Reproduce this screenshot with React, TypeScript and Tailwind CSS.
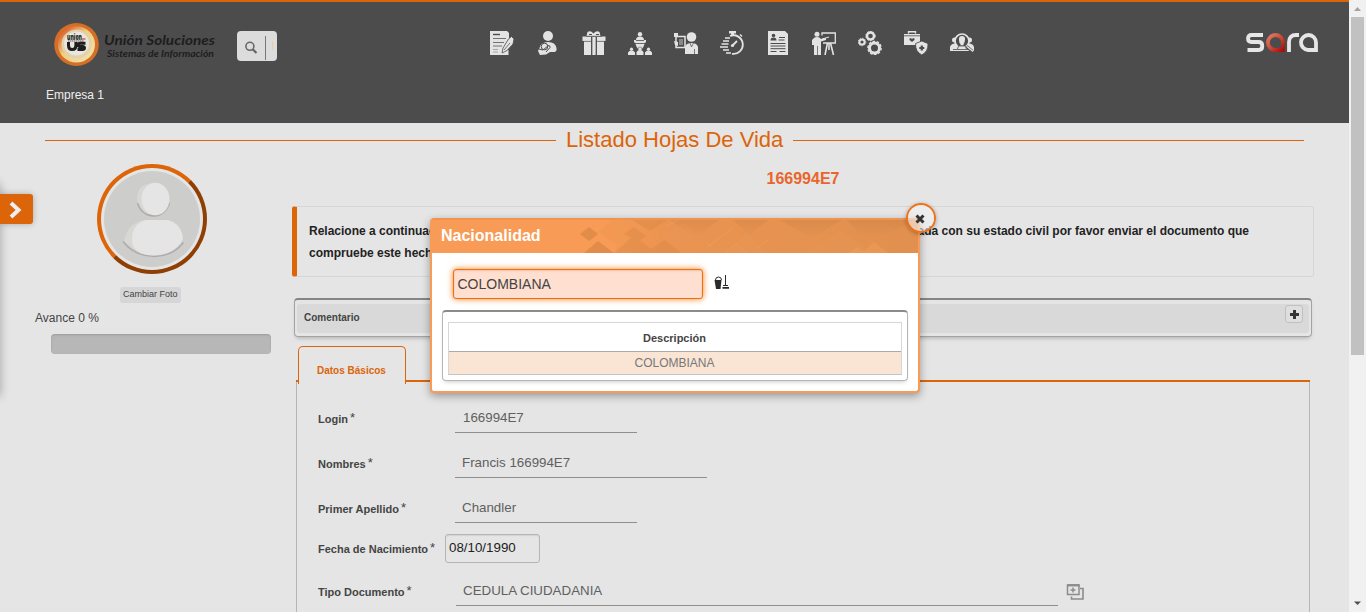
import React from "react";

type IconProps = { children: React.ReactNode };

const Glyph = ({ children }: IconProps) => (
  <svg width="24" height="24" viewBox="0 0 24 24" fill="#e3e3e3" className="shrink-0">
    {children}
  </svg>
);

const DARK = "#4c4c4c";
const LIGHT = "#e3e3e3";

const menuIcons: React.ReactNode[] = [
  <Glyph key="contract">
    <path d="M0 0h17l2 2v8l-3 6v8H0z" />
    <path d="M3 3.500h7" stroke={DARK} strokeWidth="1.4" />
    <path d="M3 7.500h13M3 11.500h11M3 15h9" stroke={DARK} strokeWidth="1" opacity=".75" />
    <path d="M3 18.500h5M3 21h5" stroke={DARK} strokeWidth="1" opacity=".4" />
    <path d="M13.500 24v-4l5-1v5z" />
    <path d="M21.500 5.500L24 8l-1 5-6 6.500-5 2.500 1-5 5.500-9z" stroke={DARK} strokeWidth=".8" />
    <path d="M14 19l6-7" stroke={DARK} strokeWidth=".7" />
  </Glyph>,
  <Glyph key="care">
    <circle cx="12" cy="5" r="5" />
    <path d="M3.500 17q1-6 8.500-6 7.500 0 8.500 6 .5 4-2.500 4h-4l-4 2.500-6 .5-2-4z" />
    <circle cx="8.500" cy="15.500" r="3.300" fill={LIGHT} stroke={DARK} strokeWidth="1" />
    <path d="M3 18l4 1 5.500-4.500q2 0 1.500 2L10 21" fill="none" stroke={DARK} strokeWidth="1" />
  </Glyph>,
  <Glyph key="gift">
    <path d="M0.500 5.500h23v4.500h-1.500v14h-20v-14h-1.500z" />
    <path d="M4.500 5l1-4q3-2 6 1.500 3-3.500 6-1.500l1 4z" />
    <path d="M7 3.500h3M14 3.500h3" stroke={DARK} strokeWidth="1.200" />
    <path d="M4 5.300h16" stroke={DARK} strokeWidth=".7" />
    <path d="M9.700 6v18M14.300 6v18" stroke={DARK} strokeWidth="1.300" />
    <path d="M1 10.400h8M15 10.400h8" stroke={DARK} strokeWidth=".7" />
  </Glyph>,
  <Glyph key="hierarchy">
    <circle cx="12" cy="3.200" r="2.200" />
    <path d="M8 9q0-3.500 4-3.500t4 3.500h2v2.500h-1l-1 3-1.500 3h-5l-1.500-3-1-3H6V9z" />
    <path d="M5.500 12.500h13M8 9.500h8" stroke={DARK} strokeWidth=".8" />
    <circle cx="3.500" cy="18.200" r="1.600" />
    <circle cx="12" cy="18" r="2" stroke={DARK} strokeWidth=".5" />
    <circle cx="20.500" cy="18.200" r="1.600" />
    <path d="M0 24v-2.500q1-2 3.500-2t3.500 2V24zM8.500 24v-3q1-2 3.500-2t3.500 2v3zM17 24v-2.500q1-2 3.500-2t3.500 2V24z" />
  </Glyph>,
  <Glyph key="training">
    <circle cx="17.500" cy="6" r="4.800" />
    <path d="M11 23v-7q1-4 6.500-4t6.500 4v7z" />
    <path d="M16 12l1.500 4 2-4M20.500 18v5" stroke={DARK} strokeWidth=".7" fill="none" />
    <path d="M2 5.500h9v11H2z" fill={DARK} stroke={LIGHT} strokeWidth="1.500" />
    <path d="M5 8h4v6H5z" opacity=".4" />
    <path d="M0 2h4v4H0zM0 10l4 1v4l-3-1z" />
  </Glyph>,
  <Glyph key="timer">
    <path d="M9 0h7v2.500H9zM11 2h3v2h-3z" />
    <path d="M20 3.500l2 2" stroke={LIGHT} strokeWidth="1.500" />
    <path d="M10 5a9.300 9.300 0 1 1 2 17.800" fill="none" stroke={LIGHT} strokeWidth="1.800" />
    <path d="M5 7h5M3 10h6M1.500 13h7M0 16h8M3 19h6M6 22h5" stroke={LIGHT} strokeWidth="1.500" />
    <path d="M12.500 14.500l4.500-4.500" stroke={LIGHT} strokeWidth="1.800" />
    <circle cx="12.500" cy="14.500" r="1.600" />
  </Glyph>,
  <Glyph key="resume">
    <path d="M2 0h17l3 3v21H2z" />
    <circle cx="7.500" cy="4.500" r="1.800" fill={DARK} />
    <path d="M4.500 9.500q0-3 3-3t3 3z" fill={DARK} />
    <path d="M13 6.500h6M12.500 9h6M4.500 12.500h15M4.500 15h15M4.500 17.700h15M4.500 20.500h6M13.500 20.500h6" stroke={DARK} strokeWidth="1" />
  </Glyph>,
  <Glyph key="teacher">
    <circle cx="5" cy="3.200" r="2.500" />
    <path d="M1 8q1-2 4-2 3 0 4 2l5-1v2l-5 1.500V24H2v-10H0V9z" />
    <path d="M5.500 15v9" stroke={DARK} strokeWidth=".7" />
    <path d="M10 4.500V2h13.300v10H11" fill="none" stroke={LIGHT} strokeWidth="1.300" />
    <path d="M15.500 12l-2.500 12M18.500 12l3 12M17 12v7" stroke={LIGHT} strokeWidth="1.600" />
    <path d="M10 8l7-2" stroke={LIGHT} />
  </Glyph>,
  <Glyph key="gears">
    <g fill="none" stroke={LIGHT}>
      <circle cx="12.500" cy="5" r="3.500" strokeWidth="2.400" />
      <circle cx="12.500" cy="5" r="4.700" strokeWidth="1" strokeDasharray="1.800 1.200" />
      <circle cx="4" cy="11" r="2.600" strokeWidth="2" />
      <circle cx="4" cy="11" r="3.800" strokeWidth=".8" strokeDasharray="1.500 1" />
      <circle cx="16.500" cy="17" r="5" strokeWidth="3" />
      <circle cx="16.500" cy="17" r="6.700" strokeWidth="1.200" strokeDasharray="2.600 1.600" />
    </g>
  </Glyph>,
  <Glyph key="insurance">
    <path d="M4.500 2.500V.8h7v1.700" fill="none" stroke={LIGHT} strokeWidth="1.400" />
    <path d="M0 3h16v11H0z" />
    <path d="M0 4.800h16" stroke={DARK} strokeWidth=".8" />
    <path d="M8 11L5.500 9q-.5-2 1.200-2L8 8l1.300-1q1.700 0 1.200 2z" fill={DARK} />
    <path d="M17.800 10l6.200 2.500q.5 8-6.200 11.500Q11 20.500 11.600 12.500z" stroke={DARK} strokeWidth=".9" />
    <path d="M17.800 14.500v5M15.300 17h5" stroke={DARK} strokeWidth="2.200" />
  </Glyph>,
  <Glyph key="search-people">
    <circle cx="4.500" cy="9" r="2.500" />
    <circle cx="19.500" cy="9" r="2.500" />
    <path d="M0 20v-4q1-3.500 5-3.500h14q4 0 5 3.500v4z" />
    <circle cx="12" cy="10" r="7" fill={DARK} stroke={LIGHT} strokeWidth="1.700" />
    <path d="M12 5q3.500 0 3 4-.5 3-1.500 4v1.500h-3V13Q9 12 9 9q-.5-4 3-4z" />
    <path d="M3 18.500h15M7.500 18l1-3h7l1 3" stroke={DARK} strokeWidth=".8" fill={LIGHT} />
    <path d="M16.500 15.500l6 5" stroke={DARK} strokeWidth="3" />
    <path d="M17 15.500l6 5" stroke={LIGHT} strokeWidth="1.500" />
  </Glyph>,
];

const CompanyLogo = () => (
  <svg width="162" height="46" viewBox="0 0 162 46" className="shrink-0">
    <defs>
      <linearGradient id="ring" x1="0" y1="0" x2="1" y2="1">
        <stop offset="0" stopColor="#d8361a" />
        <stop offset=".45" stopColor="#efcf80" />
        <stop offset="1" stopColor="#f0e6b4" />
      </linearGradient>
    </defs>
    <ellipse cx="22.500" cy="21.500" rx="22.300" ry="21.500" fill="#d66e26" />
    <ellipse cx="22.500" cy="21.500" rx="18.500" ry="18" fill="url(#ring)" />
    <ellipse cx="22.500" cy="21" rx="15" ry="14.500" fill="#e2d1ac" />
    <ellipse cx="22.500" cy="20.500" rx="12.500" ry="12" fill="#e9e6df" />
    <text x="13" y="16.500" fontFamily="Open Sans, sans-serif" fontWeight="800" fontSize="8" fill="#222" textLength="15" lengthAdjust="spacingAndGlyphs">union</text>
    <path d="M28 16h3.500" stroke="#cf3a2a" strokeWidth="1.200" />
    <path d="M14 18h16" stroke="#333" strokeWidth=".8" strokeDasharray="1.500 .5" />
    <path d="M14.500 19v3.500q0 4 3.700 4t3.700-4V19M31.500 20.300h-5q-2.300 0-2.300 1.700t2.300 1.600h2q2 .2 2 1.500t-2 1.500h-5" fill="none" stroke="#1e1e1e" strokeWidth="3" />
    <text x="50" y="22" fontFamily="Lato, sans-serif" fontWeight="700" fontStyle="italic" fontSize="14" fill="#1d1d1d" textLength="111" lengthAdjust="spacingAndGlyphs">Unión Soluciones</text>
    <text x="53" y="33.500" fontFamily="Lato, sans-serif" fontWeight="700" fontStyle="italic" fontSize="9.500" fill="#1d1d1d" textLength="107" lengthAdjust="spacingAndGlyphs">Sistemas de Información</text>
  </svg>
);

const SaraLogo = () => (
  <svg width="72" height="19" viewBox="0 0 72 19" aria-label="sara" className="mt-[31px] shrink-0">
    <defs>
      <linearGradient id="drop" x1="0" y1="0" x2="1" y2="1">
        <stop offset="0" stopColor="#dd8068" />
        <stop offset=".5" stopColor="#cf4a38" />
        <stop offset="1" stopColor="#a80f0c" />
      </linearGradient>
    </defs>
    <g fill="none" strokeWidth="3.800">
      <path d="M17 2H5.500Q2 2 2 5.500T5.500 9h7q3.800 0 3.800 4t-3.800 4H1.500" stroke="#e6e6e6" />
      <path d="M37 17h-8a7.500 7.500 0 1 1 8-7.500z" stroke="url(#drop)" />
      <path d="M43 19V9q0-7 7-7h3" stroke="#e6e6e6" />
      <path d="M70 17h-8a7.500 7.500 0 1 1 8-7.500z" stroke="#e6e6e6" />
    </g>
  </svg>
);

const Header = () => (
  <header className="flex h-[123px] shrink-0 flex-col border-t-2 border-[#dc6409] bg-[#4c4c4c]">
    <div className="flex h-[78px] items-start pl-[54px]">
      <div className="mt-[21px] flex">
        <CompanyLogo />
      </div>
      <div className="ml-[21px] mt-[29px] flex h-[30px] w-10 items-start rounded bg-[#dcdcdc]">
        <svg width="13" height="13" viewBox="0 0 13 13" className="ml-2 mt-[10px]" fill="none" stroke="#666">
          <circle cx="4.900" cy="5.300" r="4" strokeWidth="1.600" />
          <path d="M7.700 8.200l3.800 3.800" strokeWidth="2.200" />
        </svg>
        <span className="ml-[7px] mt-[5px] h-6 w-px bg-[#777]" />
        <span className="ml-[6px] mt-[10px] h-[9px] w-px bg-[#e8cf9a]" />
      </div>
      <nav className="ml-[213px] mt-[29px] flex gap-[22px]">{menuIcons}</nav>
      <div className="ml-[272px]">
        <SaraLogo />
      </div>
    </div>
    <p className="pl-[46px] pt-[7px] text-[12px] leading-[17px] text-[#efefef]">Empresa 1</p>
  </header>
);

const Avatar = () => (
  <div className="ml-[97px] h-[110px] w-[110px] rounded-full border-4 border-b-[#8f3f04] border-l-[#dc6409] border-r-[#8f3f04] border-t-[#dc6409] p-[3px]">
    <svg width="96" height="96" viewBox="0 0 96 96">
      <circle cx="48" cy="48" r="48" fill="#cdcdcb" />
      <path d="M33 28q0-15 16-16v33q-15-1-16-17zM20 70q4-20 23-21l10 34q-20 1-33-13z" fill="#d7d7d5" />
      <path d="M33.500 32q4 12.500 16 13Q61 45 65.500 32M19 70.500q11 14.500 31.500 15Q69 85 79.500 71.500" fill="none" stroke="#b1aaaa" strokeWidth="1.400" />
      <ellipse cx="51.500" cy="28" rx="14" ry="16.300" fill="#e5e5e5" />
      <path d="M28 68q0-15 14-19h22q14 4 15 19-8 16-30 16.500Q28 84 28 68z" fill="#e5e5e5" />
    </svg>
  </div>
);

const Profile = () => (
  <aside className="flex w-[292px] shrink-0 flex-col pt-[7px]">
    <Avatar />
    <div className="ml-[120px] mt-[13px] h-4 w-[61px] whitespace-nowrap rounded-[3px] bg-[#d6d6d6] pl-[3px] text-[9px] leading-[15px] text-[#444]">
      Cambiar Foto
    </div>
    <p className="ml-[35px] mt-[7px] text-[12px] leading-4 text-[#444]">Avance 0 %</p>
    <div className="ml-[51px] mt-[8px] h-5 w-[220px] rounded bg-[#b7b7b7] shadow-[inset_0_1px_2px_rgba(0,0,0,0.15)]" />
  </aside>
);

type RowProps = { label: string; height: string; top: string; children: React.ReactNode };

const Row = ({ label, height, top, children }: RowProps) => (
  <div className={`flex items-start pl-[21px] ${height}`}>
    <label className={`flex w-[137px] shrink-0 whitespace-nowrap text-[11px] font-bold leading-4 text-[#444] ${top}`}>
      {label}
      <span className="-mt-px ml-[2px] text-[13px] font-normal">*</span>
    </label>
    {children}
  </div>
);

const Value = ({ width, text, pad }: { width: string; text: string; pad: string }) => (
  <div className={`h-[31px] border-b border-[#8f8f8f] text-[13.330px] leading-[31px] text-[#606060] ${pad} ${width}`}>
    {text}
  </div>
);

const Sheet = () => (
  <section className="flex w-[1022px] shrink-0 flex-col">
    <h2 className="pt-[12px] text-center text-[16px] font-bold leading-5 text-[#e8662c]">166994E7</h2>
    <div className="mt-[17px] flex h-[71px] flex-col rounded-[3px] border border-l-[5px] border-[#d6d6d6] border-l-[#dc6409] pl-3 pr-[64px] pt-[13px] text-[12px] font-bold leading-[22px] text-[#222]">
      <div className="flex justify-between whitespace-nowrap">
        <span>Relacione a continuación</span>
        <span>relacionada con su estado civil por favor enviar el documento que</span>
      </div>
      <span>compruebe este hecho.</span>
    </div>
    <div className="ml-[2px] mt-[21px] h-[39px] w-[1018px] rounded-[4px] border border-t-2 border-[#a3a3a3] border-t-[#858585] px-[2px] pb-[3px] pt-[4px] shadow-[0_3px_4px_-2px_rgba(0,0,0,0.25)]">
      <div className="flex h-[29px] items-start justify-between rounded-[3px] bg-[#d9d9d9] pl-[7px] pr-[6px]">
        <span className="pt-[6px] text-[10px] font-bold leading-4 text-[#444]">Comentario</span>
        <span className="mt-px flex h-[18px] w-[18px] items-center justify-center rounded-[3px] border border-[#c0c0c0] bg-[#dedede]">
          <svg width="9" height="9" viewBox="0 0 9 9" fill="#333">
            <path d="M3 0h3v3h3v3H6v3H3V6H0V3h3z" />
          </svg>
        </span>
      </div>
    </div>
    <div className="ml-1 mt-[9px] flex h-[36px] items-end">
      <span className="h-[2px] w-[2px] bg-[#dc6409]" />
      <div className="z-10 -mb-[2px] h-[38px] w-[108px] shrink-0 rounded-t-[5px] border border-b-0 border-[#dc6409] bg-[#e5e5e5] pl-[18px] pt-[16px] text-[10px] font-bold leading-4 text-[#dc6409]">
        Datos Básicos
      </div>
      <span className="h-[2px] w-[904px] bg-[#dc6409]" />
    </div>
    <div className="ml-1 h-[260px] w-[1014px] border-x border-[#b5b5b5] pt-[20px]">
      <Row label="Login" height="h-[45px]" top="mt-[9px]">
        <Value width="w-[182px]" pad="pl-[8px]" text="166994E7" />
      </Row>
      <Row label="Nombres" height="h-[45px]" top="mt-[9px]">
        <Value width="w-[252px]" pad="pl-[7px]" text="Francis 166994E7" />
      </Row>
      <Row label="Primer Apellido" height="h-[42px]" top="mt-[9px]">
        <Value width="w-[182px]" pad="pl-[7px]" text="Chandler" />
      </Row>
      <Row label="Fecha de Nacimiento" height="h-[41px]" top="mt-[7px]">
        <div className="-ml-[10px] h-[29px] w-[95px] rounded-[3px] border border-[#b5b5b5] pl-[3px] text-[13.330px] leading-[26px] text-[#222] shadow-[inset_0_1px_1px_rgba(0,0,0,0.08)]">
          08/10/1990
        </div>
      </Row>
      <Row label="Tipo Documento" height="h-[45px]" top="mt-[9px]">
        <div className="ml-px">
          <Value width="w-[602px]" pad="pl-[7px]" text="CEDULA CIUDADANIA" />
        </div>
        <svg width="18" height="17" viewBox="0 0 18 17" className="ml-[8px] mt-[8px]" fill="none" stroke="#8c8c8c">
          <path d="M1.500 2h11.500v9.500H1.500z" strokeWidth="1.500" />
          <path d="M1 2.300h12.500" strokeWidth="2.200" />
          <path d="M4.500 7h5M7 4.500v5" strokeWidth="1.500" />
          <path d="M14 5.500h3v10.500H5.500v-2.500" strokeWidth="1.600" />
        </svg>
      </Row>
    </div>
  </section>
);

const Scrollbar = () => (
  <div className="flex h-full w-[17px] shrink-0 flex-col items-center bg-[#f1f1f1]">
    <svg width="17" height="17" viewBox="0 0 17 17" className="shrink-0" fill="#a3a3a3">
      <path d="M5 11l3.500-4 3.500 4z" />
    </svg>
    <span className="h-[338px] w-[13px] bg-[#c1c1c1]" />
    <svg width="17" height="17" viewBox="0 0 17 17" className="mt-auto shrink-0" fill="#505050">
      <path d="M5 6.500h7L8.500 10z" />
    </svg>
  </div>
);

const HeaderPattern = () => (
  <svg width="486" height="33" viewBox="0 0 486 33" className="absolute left-0 top-0">
    <defs>
      <linearGradient id="shade" x1="0" x2="1">
        <stop offset="0" stopColor="#f79b56" />
        <stop offset=".2" stopColor="#e8924f" />
        <stop offset="1" stopColor="#dc8d4d" />
      </linearGradient>
      <linearGradient id="depth" x1="0" y1="0" x2="0" y2="1">
        <stop offset="0" stopColor="#8a5a30" stopOpacity=".12" />
        <stop offset="1" stopColor="#ffa35a" stopOpacity=".1" />
      </linearGradient>
    </defs>
    <path d="M178 0h308v33H182l4-10-20-11z" fill="url(#shade)" opacity=".8" />
    <path d="M148 14l9-7 9 7-9 7zM152 33l14-12 16 12z" fill="#dd8a47" opacity=".85" />
    <path d="M166 12l16-12 18 13-16 12z" fill="#f09752" opacity=".6" />
    <path d="M182 33l20-18 22 18zM200 0l18 11 17-11zM192 14l10-7 12 9-8 6zM219 29l14-9 16 13h-26z" fill="#cf8142" opacity=".3" />
    <path d="M238 0l25 18 24-18zM301 0l16 15 19-15zM348 0l31 18 31-18zM414 0l24 23 45-23z" fill="url(#depth)" />
    <path d="M228 15l24-12 14 13-18 14zM292 33l23-21 20 21zM369 33l38-22 35 22z" fill="#e9975a" opacity=".3" />
    <path d="M416 33l9-6 7 4 10-9 14 11z" fill="#ee9a57" opacity=".7" />
    <path d="M234 6l12-6M275 27l26-19M280 27l-6-5M293 33l11-9 11 9M324 29l12-9" fill="none" stroke="#efa264" strokeWidth=".7" opacity=".8" />
  </svg>
);

const Modal = () => (
  <div className="absolute left-[430px] top-[218px] z-20 h-[175px] w-[490px] rounded-[4px] border-2 border-[#f79b56] border-t-[#ee9450] bg-white shadow-[0_3px_9px_rgba(0,0,0,0.35)]">
    <div className="relative h-[33px] bg-[#f79b56] pl-[9px]">
      <HeaderPattern />
      <h3 className="relative text-[16px] font-bold leading-[31px] text-white">Nacionalidad</h3>
    </div>
    <div className="flex items-start pl-[21px] pt-[16px]">
      <div className="h-[30px] w-[250px] rounded-[3px] border border-[#f06f0c] bg-[#fedfd0] pl-[3.500px] text-[14px] leading-[28px] text-[#444] shadow-[0_0_6px_#f58220,inset_0_1px_2px_rgba(120,50,0,0.15)]">
        COLOMBIANA
      </div>
      <svg width="16" height="16" viewBox="0 0 16 16" className="ml-[11px] mt-[6px]" fill="#2b2b2b">
        <path d="M1.500 5q0-3 3-3t3 3" fill="none" stroke="#2b2b2b" />
        <path d="M.5 5h7L6.500 14H2z" />
        <path d="M11 0h1v10h-1zM9 10h5v1H9zM8.500 12h6.500v1.700H8.500z" />
      </svg>
    </div>
    <div className="ml-[10px] mt-[11px] h-[71px] w-[466px] rounded-[4px] border border-t-2 border-[#b5b5b5] border-t-[#8b8b8b] px-[5px] pt-[10px] shadow-[0_3px_4px_-2px_rgba(0,0,0,0.2)]">
      <div className="h-[53px] border border-[#d6d6d6] border-b-[#c4c4c4] text-center">
        <div className="h-[29px] border-b border-[#aaa] pr-px text-[11px] font-bold leading-[30px] text-[#444]">Descripción</div>
        <div className="h-[22px] bg-[#fae5d5] pr-px text-[12px] leading-[23px] text-[#777]">COLOMBIANA</div>
      </div>
    </div>
    <button className="absolute -right-[18px] -top-[17px] flex h-[30px] w-[30px] items-center justify-center rounded-full border-2 border-[#ef7118] shadow-[0_1px_4px_rgba(0,0,0,0.3)]">
      <span className="absolute inset-0 rounded-full bg-[#f2f2f2]/60" />
      <svg width="10" height="10" viewBox="0 0 10 10" className="relative -left-[1px] top-[1px]">
        <path d="M1.500 1.500l7 7M8.500 1.500l-7 7" stroke="#333" strokeWidth="3" />
      </svg>
    </button>
  </div>
);

export default function App() {
  return (
    <div className="relative flex h-[612px] w-[1366px] overflow-hidden bg-[#e5e5e5] font-['Liberation_Sans',Arial,sans-serif]">
      <div className="flex w-[1349px] shrink-0 flex-col">
        <Header />
        <div className="flex h-[34px] shrink-0 items-center gap-[10px] pl-[45px]">
          <span className="h-px w-[511px] bg-[#dc6409]" />
          <h1 className="w-[217px] whitespace-nowrap text-center text-[22px] leading-[34px] text-[#dc6409]">Listado Hojas De Vida</h1>
          <span className="h-px w-[511px] bg-[#dc6409]" />
        </div>
        <main className="flex">
          <Profile />
          <Sheet />
        </main>
      </div>
      <Scrollbar />
      <div className="absolute -left-[10px] top-[184px] h-[212px] w-[10px] shadow-[0_0_10px_rgba(0,0,0,0.3)]" />
      <button className="absolute left-0 top-[194px] flex h-[30px] w-[33px] items-center rounded-r-[3px] bg-[#dc6409] pl-[9px] shadow-[0_0_6px_rgba(0,0,0,0.25)]">
        <svg width="14" height="18" viewBox="0 0 14 18" className="mt-[2px]">
          <path d="M2 2l7.500 7L2 16" fill="none" stroke="#efefef" strokeWidth="4" />
        </svg>
      </button>
      <Modal />
    </div>
  );
}
